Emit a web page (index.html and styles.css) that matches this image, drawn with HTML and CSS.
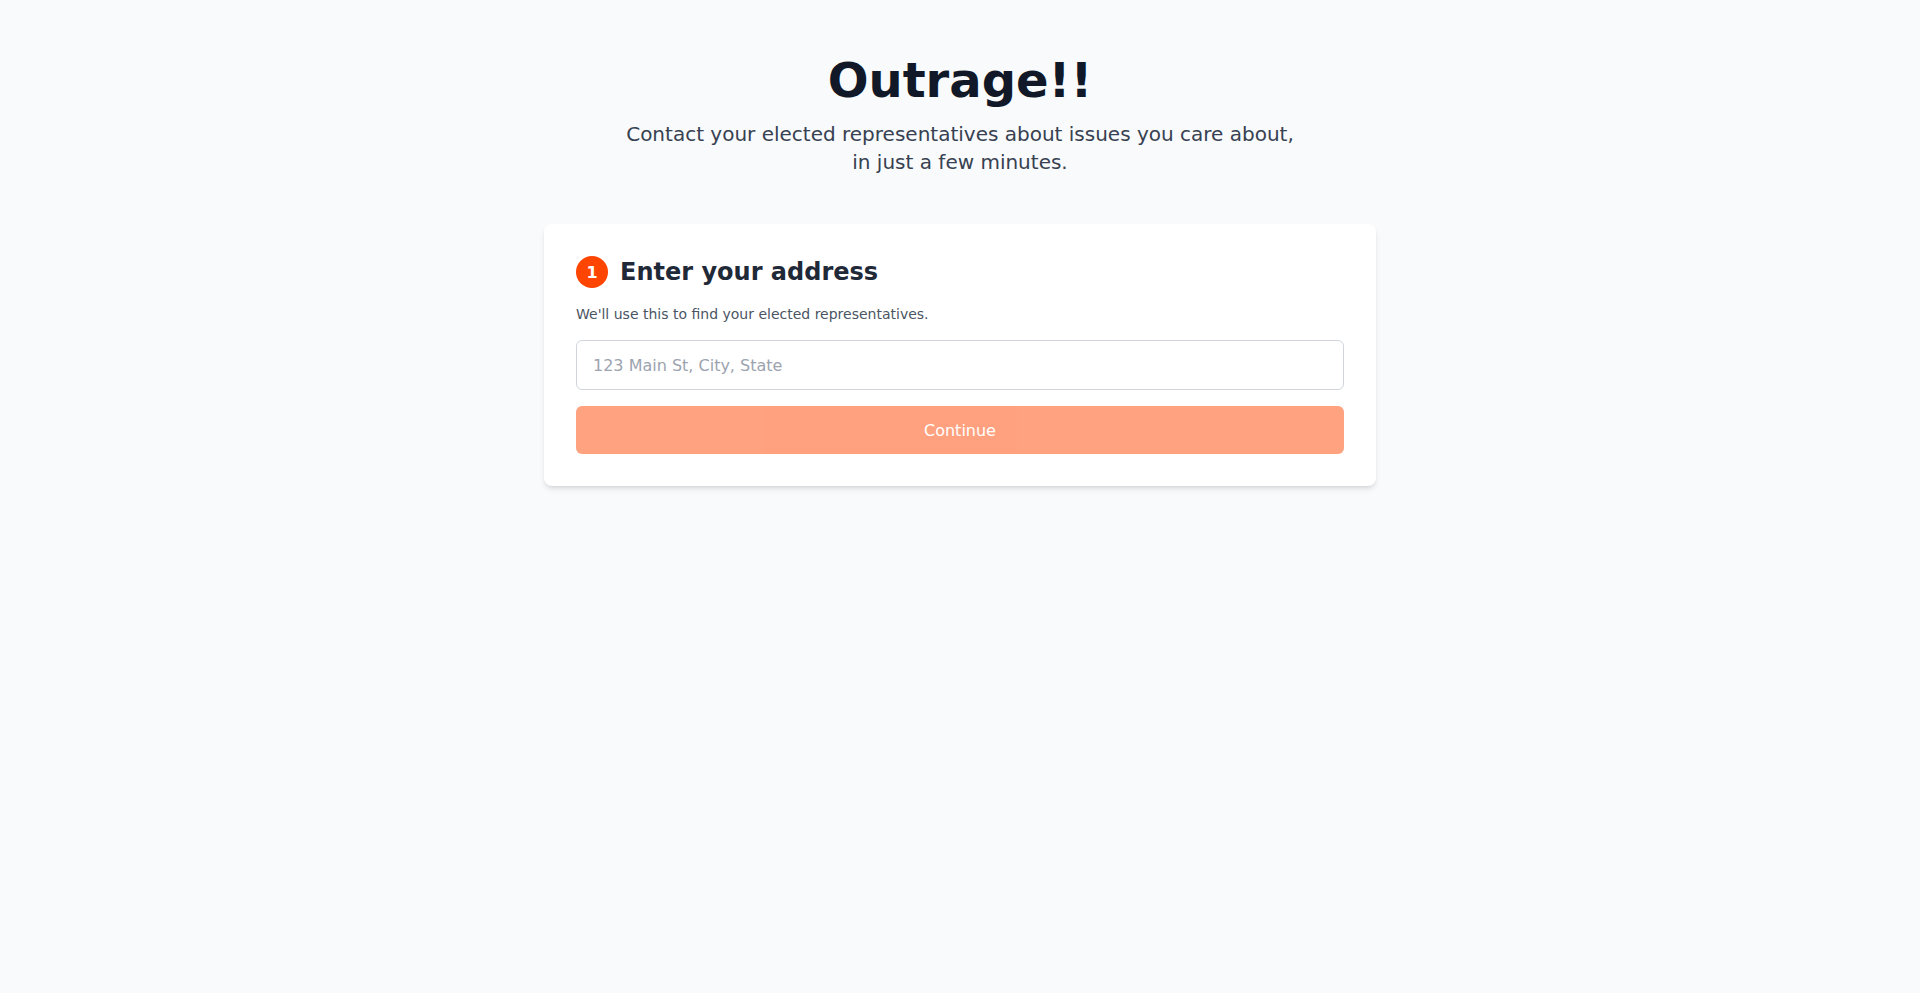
FILE: index.html
```html
<!DOCTYPE html>
<html lang="en">
<head>
<meta charset="utf-8">
<title>Outrage!!</title>
<link rel="stylesheet" href="styles.css">
</head>
<body>
<main class="page">
  <header class="hero">
    <h1 class="title">Outrage!!</h1>
    <p class="lead">Contact your elected representatives about issues you care about, in just a few minutes.</p>
  </header>
  <section class="card">
    <div class="step-head">
      <span class="step-num">1</span>
      <h2 class="step-title">Enter your address</h2>
    </div>
    <p class="step-desc">We'll use this to find your elected representatives.</p>
    <input class="address-input" type="text" placeholder="123 Main St, City, State">
    <button class="continue-btn" type="button" disabled>Continue</button>
  </section>
</main>
</body>
</html>
```

FILE: styles.css
```css
* { box-sizing: border-box; }
html, body { margin: 0; padding: 0; }
body {
  background: #f9fafb;
  font-family: "DejaVu Sans", sans-serif;
  color: #111827;
  min-height: 993px;
}
.page {
  max-width: 832px;
  margin: 0 auto;
  padding: 56px 0 48px;
}
.hero {
  text-align: center;
  margin-bottom: 48px;
}
.title {
  margin: 0 0 16px;
  font-size: 48px;
  line-height: 48px;
  font-weight: 700;
  color: #111827;
}
.lead {
  margin: 0 auto;
  max-width: 672px;
  font-size: 20px;
  line-height: 28px;
  color: #374151;
}
.card {
  background: #fff;
  border-radius: 8px;
  box-shadow: 0 4px 6px -1px rgba(0,0,0,0.1), 0 2px 4px -2px rgba(0,0,0,0.1);
  padding: 32px;
  display: flex;
  flex-direction: column;
}
.step-head {
  display: flex;
  align-items: center;
  gap: 12px;
  margin-bottom: 16px;
}
.step-num {
  width: 32px;
  height: 32px;
  border-radius: 50%;
  background: #ff4500;
  color: #fff;
  font-weight: 700;
  font-size: 16px;
  display: flex;
  align-items: center;
  justify-content: center;
  flex-shrink: 0;
}
.step-title {
  margin: 0;
  font-size: 24px;
  line-height: 32px;
  font-weight: 700;
  color: #1f2937;
}
.step-desc {
  margin: 0 0 16px;
  font-size: 14px;
  line-height: 20px;
  color: #4b5563;
}
.address-input {
  width: 100%;
  height: 50px;
  padding: 12px 16px;
  border: 1px solid #d1d5db;
  border-radius: 6px;
  font-family: inherit;
  font-size: 16px;
  color: #111827;
  background: #fff;
  outline: none;
  margin-bottom: 16px;
}
.address-input::placeholder { color: #9ca3af; }
.continue-btn {
  width: 100%;
  height: 48px;
  border: 0;
  border-radius: 6px;
  background: #ff4500;
  opacity: 0.5;
  color: #fff;
  font-family: inherit;
  font-size: 16px;
}
```
